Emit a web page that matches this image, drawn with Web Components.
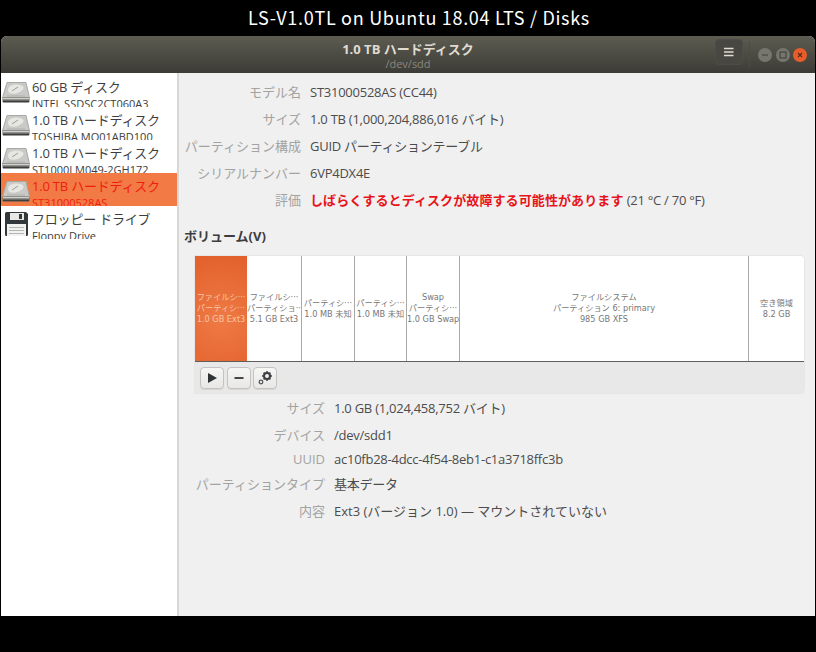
<!DOCTYPE html>
<html lang="ja">
<head>
<meta charset="utf-8">
<title>Disks</title>
<style>
    html, body { margin: 0; padding: 0; background: #000; }
    body { font-family: "Open Sans", "Noto Sans CJK JP", sans-serif; font-size: 13px; width: 816px; height: 652px; overflow: hidden; }
</style>
</head>
<body>

<disks-stage heading="LS-V1.0TL on Ubuntu 18.04 LTS / Disks">
    <disks-window>
        <window-header slot="header" title-text="1.0 TB ハードディスク" sub-text="/dev/sdd"></window-header>
        <disk-list slot="side">
            <disk-row name="60 GB ディスク" model="INTEL SSDSC2CT060A3"></disk-row>
            <disk-row name="1.0 TB ハードディスク" model="TOSHIBA MQ01ABD100"></disk-row>
            <disk-row name="1.0 TB ハードディスク" model="ST1000LM049-2GH172"></disk-row>
            <disk-row name="1.0 TB ハードディスク" model="ST31000528AS" selected></disk-row>
            <disk-row name="フロッピー ドライブ" model="Floppy Drive" kind="floppy"></disk-row>
        </disk-list>
        <disk-detail slot="main"></disk-detail>
    </disks-window>
</disks-stage>

<script>
// hard drive and floppy pictures for the side list
const ICON_DISK = `
<svg width="28" height="21" viewBox="0 0 28 21">
    <path d="M5 0.5 H24 L27.5 16 H0.5 Z" fill="#c9c9c6" stroke="#a8a8a4" stroke-width="1"/>
    <path d="M8 4 C12 1.5 20 2 21.5 5 C22.5 8 16 12.5 9.5 11.5 C5.5 11 5 6.5 8 4 Z" fill="#e6e6e3"/>
    <path d="M10 9 L16 5" stroke="#9d9d99" stroke-width="1"/>
    <path d="M5 14 H23" stroke="#b0b0ac" stroke-width="1"/>
    <rect x="0.5" y="15.5" width="27" height="5" rx="1.2" fill="#6a6a66"/>
    <rect x="1" y="16" width="26" height="1.4" fill="#d0d0cd"/>
    <rect x="1" y="19" width="26" height="1.2" fill="#3f3f3c"/>
</svg>`;

const ICON_FLOPPY = `
<svg width="23" height="24" viewBox="0 0 23 24">
    <path d="M0 1.5 a1.5 1.5 0 0 1 1.5-1.5 H21 L23 2 V22.5 a1.5 1.5 0 0 1-1.5 1.5 H1.5 a1.5 1.5 0 0 1-1.5-1.5 Z" fill="#33383a"/>
    <rect x="5" y="1" width="14" height="7" fill="#e8e8e6"/>
    <rect x="14" y="2" width="3" height="5" fill="#33383a"/>
    <rect x="2" y="12" width="19" height="12" fill="#f2f2f0"/>
    <path d="M4 15.5 H19 M4 18.5 H19 M4 21.5 H19" stroke="#b5b5b2" stroke-width="1"/>
</svg>`;


class DisksStage extends HTMLElement {
    constructor() {
        super();
        this.attachShadow({ mode: 'open' });
        this.shadowRoot.innerHTML = `
        <style>
            :host { display: flex; flex-direction: column; width: 816px; height: 652px; background: #000; }
            .heading {
                height: 36px;
                display: flex;
                align-items: center;
                justify-content: center;
                box-sizing: border-box;
                padding: 0 0 2px 22px;
                color: #fff;
                font-family: "Noto Sans CJK JP", "Noto Sans", sans-serif;
                font-size: 18px;
                letter-spacing: 0.7px;
                white-space: nowrap;
            }
        </style>
        <div class="heading">${this.getAttribute('heading')}</div>
        <slot></slot>
        `;
    }
}
customElements.define('disks-stage', DisksStage);


class DisksWindow extends HTMLElement {
    constructor() {
        super();
        this.attachShadow({ mode: 'open' });
        this.shadowRoot.innerHTML = `
        <style>
            :host { display: flex; flex-direction: column; height: 580px; margin: 0 1px; background: #efefef; border-radius: 6px 6px 0 0; overflow: hidden; }
            .body { flex: 1; display: flex; min-height: 0; }
            .side { width: 176px; flex: none; background: #fff; border-right: 2px solid #d9d8d6; }
            .main { flex: 1; min-width: 0; background: #f0f0f0; }
        </style>
        <slot name="header"></slot>
        <div class="body">
            <div class="side"><slot name="side"></slot></div>
            <div class="main"><slot name="main"></slot></div>
        </div>
        `;
    }
}
customElements.define('disks-window', DisksWindow);


class WindowHeader extends HTMLElement {
    constructor() {
        super();
        this.attachShadow({ mode: 'open' });
        this.shadowRoot.innerHTML = `
        <style>
            :host {
                display: grid;
                grid-template-columns: 1fr auto 1fr;
                align-items: center;
                height: 37px;
                background: linear-gradient(#5d5c51, #3c3b36);
            }
            .titles { grid-column: 2; text-align: center; margin-top: 2px; }
            .title { color: #dfdbd2; font-weight: 700; font-size: 13px; line-height: 16px; }
            .sub { color: #8a887e; font-size: 11px; line-height: 14px; }
            .controls { grid-column: 3; display: flex; align-items: center; justify-content: flex-end; padding-right: 8px; height: 100%; }
            .menu {
                width: 28px;
                height: 26px;
                box-sizing: border-box;
                margin-right: 6px;
                align-self: flex-start;
                margin-top: 3px;
                border: 1px solid #4d4c46;
                border-radius: 4px;
                background: #484741;
                display: flex;
                align-items: center;
                justify-content: center;
            }
            .sep { width: 1px; height: 26px; background: #4b4a44; margin-right: 5px; }
            .dot {
                width: 14px;
                height: 14px;
                border-radius: 50%;
                margin-left: 3.5px;
                display: flex;
                align-items: center;
                justify-content: center;
                background: #77766e;
            }
            .close { background: #e95c2c; }
        </style>
        <div class="titles">
            <div class="title">${this.getAttribute('title-text')}</div>
            <div class="sub">${this.getAttribute('sub-text')}</div>
        </div>
        <div class="controls">
            <div class="menu">
                <svg width="10" height="10" viewBox="0 0 10 10"><path d="M0 1.5 H9.5 M0 5 H9.5 M0 8.5 H9.5" stroke="#dfdbd2" stroke-width="1.6"/></svg>
            </div>
            <div class="sep"></div>
            <div class="dot"><svg width="8" height="8" viewBox="0 0 8 8"><path d="M1 4 H7" stroke="#3c3b36" stroke-width="1"/></svg></div>
            <div class="dot"><svg width="8" height="8" viewBox="0 0 8 8"><rect x="1" y="1" width="6" height="6" fill="none" stroke="#3c3b36" stroke-width="1"/></svg></div>
            <div class="dot close"><svg width="8" height="8" viewBox="0 0 8 8"><path d="M2 2 L6 6 M6 2 L2 6" stroke="#5a2a18" stroke-width="1.2"/></svg></div>
        </div>
        `;
    }
}
customElements.define('window-header', WindowHeader);


class DiskList extends HTMLElement {
    constructor() {
        super();
        this.attachShadow({ mode: 'open' });
        this.shadowRoot.innerHTML = `
        <style>
            :host { display: block; padding-top: 1px; }
        </style>
        <slot></slot>
        `;
    }
}
customElements.define('disk-list', DiskList);


class DiskRow extends HTMLElement {
    constructor() {
        super();
        this.attachShadow({ mode: 'open' });
        const floppy = this.getAttribute('kind') == 'floppy';
        this.shadowRoot.innerHTML = `
        <style>
            :host { display: flex; align-items: flex-start; height: 33px; overflow: hidden; color: #3d3d3d; }
            :host([selected]) { background: #f27a44; color: #f01c10; }
            .icon { width: 31px; flex: none; box-sizing: border-box; padding-left: 1px; margin-top: 8px; line-height: 0; }
            .icon.floppy { padding-left: 4px; margin-top: 6px; }
            .name { font-size: 13px; line-height: 18px; margin-top: 4px; white-space: nowrap; letter-spacing: -0.2px; }
            .model { font-size: 11px; line-height: 13px; margin-top: 1px; white-space: nowrap; }
        </style>
        <div class="icon ${floppy ? 'floppy' : ''}">${floppy ? ICON_FLOPPY : ICON_DISK}</div>
        <div>
            <div class="name">${this.getAttribute('name')}</div>
            <div class="model">${this.getAttribute('model')}</div>
        </div>
        `;
    }
}
customElements.define('disk-row', DiskRow);


class InfoRow extends HTMLElement {
    constructor() {
        super();
        this.attachShadow({ mode: 'open' });
        this.shadowRoot.innerHTML = `
        <style>
            :host { display: grid; grid-template-columns: var(--label-width) 1fr; column-gap: var(--label-gap); align-items: center; white-space: nowrap; line-height: 18px; }
            .label { text-align: right; color: #a3a3a1; }
            .value { color: #4c4c4c; letter-spacing: var(--spacing, -0.25px); }
        </style>
        <div class="label">${this.getAttribute('label')}</div>
        <div class="value"><slot></slot></div>
        `;
    }
}
customElements.define('info-row', InfoRow);


class PartitionBar extends HTMLElement {
    constructor() {
        super();
        this.attachShadow({ mode: 'open' });
        this.shadowRoot.innerHTML = `
        <style>
            :host { display: flex; height: 105px; background: #fff; border-bottom: 1px solid #5e5e5c; border-radius: 0 4px 0 0; overflow: hidden; }
        </style>
        <slot></slot>
        `;
    }
}
customElements.define('partition-bar', PartitionBar);


class PartitionCell extends HTMLElement {
    constructor() {
        super();
        this.attachShadow({ mode: 'open' });
        const lines = this.getAttribute('lines').split('|').map(l => `<div>${l}</div>`).join('');
        this.shadowRoot.innerHTML = `
        <style>
            :host {
                display: flex;
                flex-direction: column;
                justify-content: center;
                box-sizing: border-box;
                width: var(--w);
                flex: none;
                border-right: 1px solid #a9a9a7;
                overflow: hidden;
                text-align: center;
                white-space: nowrap;
                font-family: "DejaVu Sans", "Noto Sans CJK JP", sans-serif;
                font-size: 8.2px;
                line-height: 11px;
                color: #777;
            }
            :host(:last-child) { border-right: none; }
            :host([selected]) {
                background: radial-gradient(circle at 50% 60%, #ef7a45, #e2602b);
                color: #f6c6a8;
                border-right: none;
            }
            div:first-child:nth-last-child(3) { margin-bottom: 1.5px; }
        </style>
        ${lines}
        `;
    }
}
customElements.define('partition-cell', PartitionCell);


class ToolButton extends HTMLElement {
    constructor() {
        super();
        this.attachShadow({ mode: 'open' });
        this.shadowRoot.innerHTML = `
        <style>
            :host {
                display: flex;
                align-items: center;
                justify-content: center;
                box-sizing: border-box;
                width: 24px;
                height: 22px;
                border: 1px solid #c4c3c1;
                border-radius: 4px;
                background: linear-gradient(#f6f6f5, #e8e7e5);
                box-shadow: 0 1px 0 #d6d5d3;
            }
        </style>
        <slot></slot>
        `;
    }
}
customElements.define('tool-button', ToolButton);


class DiskDetail extends HTMLElement {
    constructor() {
        super();
        this.attachShadow({ mode: 'open' });
        this.shadowRoot.innerHTML = `
        <style>
            :host { display: block; padding: 10px 11px 0 5px; }
            .top { display: grid; grid-auto-rows: 18px; row-gap: 9px; --label-width: 117px; --label-gap: 9px; }
            .warn { color: #e8141a; font-weight: 700; letter-spacing: 0.1px; }
            h3 { margin: 18px 0 11px; font-size: 13px; line-height: 18px; color: #3d3d3d; font-weight: 700; }
            .volumes { margin-left: 11px; }
            .frame { box-shadow: 0 0 0 1px #e6e6e4; border-radius: 0 4px 4px 0; }
            .tools { display: flex; gap: 2.5px; height: 31px; align-items: center; box-sizing: border-box; padding-left: 5px; background: #e8e8e8; }
            .bottom { display: grid; margin-top: 6px; --label-width: 130px; --label-gap: 9px; grid-template-rows: 18px 18px 18px 18px 18px; row-gap: 0; }
            /* the rows are not evenly spaced in the app */
            .bottom info-row:nth-child(2) { margin-top: 9px; }
            .bottom info-row:nth-child(3) { margin-top: 15px; }
            .bottom info-row:nth-child(4) { margin-top: 22px; }
            .bottom info-row:nth-child(5) { margin-top: 31px; }
        </style>
        <div class="top">
            <info-row label="モデル名">ST31000528AS (CC44)</info-row>
            <info-row label="サイズ">1.0 TB (1,000,204,886,016 バイト)</info-row>
            <info-row label="パーティション構成">GUID パーティションテーブル</info-row>
            <info-row label="シリアルナンバー">6VP4DX4E</info-row>
            <info-row label="評価"><span class="warn">しばらくするとディスクが故障する可能性があります</span> (21 °C / 70 °F)</info-row>
        </div>
        <h3>ボリューム(V)</h3>
        <div class="volumes">
            <div class="frame">
                <partition-bar>
                    <partition-cell style="--w:52px" selected lines="ファイルシ···|パーティシ···|1.0 GB Ext3"></partition-cell>
                    <partition-cell style="--w:55px" lines="ファイルシ···|パーティショ···|5.1 GB Ext3"></partition-cell>
                    <partition-cell style="--w:53px" lines="パーティシ···|1.0 MB 未知"></partition-cell>
                    <partition-cell style="--w:52px" lines="パーティシ···|1.0 MB 未知"></partition-cell>
                    <partition-cell style="--w:53px" lines="Swap|パーティシ···|1.0 GB Swap"></partition-cell>
                    <partition-cell style="--w:289px" lines="ファイルシステム|パーティション 6: primary|985 GB XFS"></partition-cell>
                    <partition-cell style="--w:55px" lines="空き領域|8.2 GB"></partition-cell>
                </partition-bar>
                <div class="tools">
                    <tool-button><svg width="12" height="12" viewBox="0 0 12 12"><path d="M2 1 L11 6 L2 11 Z" fill="#2e3436"/></svg></tool-button>
                    <tool-button><svg width="12" height="10" viewBox="0 0 12 10"><path d="M1.5 5 H10.5" stroke="#2e3436" stroke-width="1.8"/></svg></tool-button>
                    <tool-button><svg width="16" height="16" viewBox="0 0 16 16">
                        <circle cx="10" cy="6" r="3" fill="none" stroke="#3c3f41" stroke-width="2"/>
                        <path d="M10 1 V2.5 M10 9.5 V11 M5 6 H6.5 M13.5 6 H15 M6.6 2.6 L7.6 3.6 M12.4 8.4 L13.4 9.4 M13.4 2.6 L12.4 3.6 M7.6 8.4 L6.6 9.4" stroke="#3c3f41" stroke-width="1.5"/>
                        <circle cx="4" cy="12" r="1.8" fill="none" stroke="#55585a" stroke-width="1.3"/>
                    </svg></tool-button>
                </div>
            </div>
            <div class="bottom">
                <info-row label="サイズ">1.0 GB (1,024,458,752 バイト)</info-row>
                <info-row label="デバイス">/dev/sdd1</info-row>
                <info-row label="UUID">ac10fb28-4dcc-4f54-8eb1-c1a3718ffc3b</info-row>
                <info-row label="パーティションタイプ">基本データ</info-row>
                <info-row label="内容" style="--spacing:0">Ext3 (バージョン 1.0) — マウントされていない</info-row>
            </div>
        </div>
        `;
    }
}
customElements.define('disk-detail', DiskDetail);
</script>
</body>
</html>
